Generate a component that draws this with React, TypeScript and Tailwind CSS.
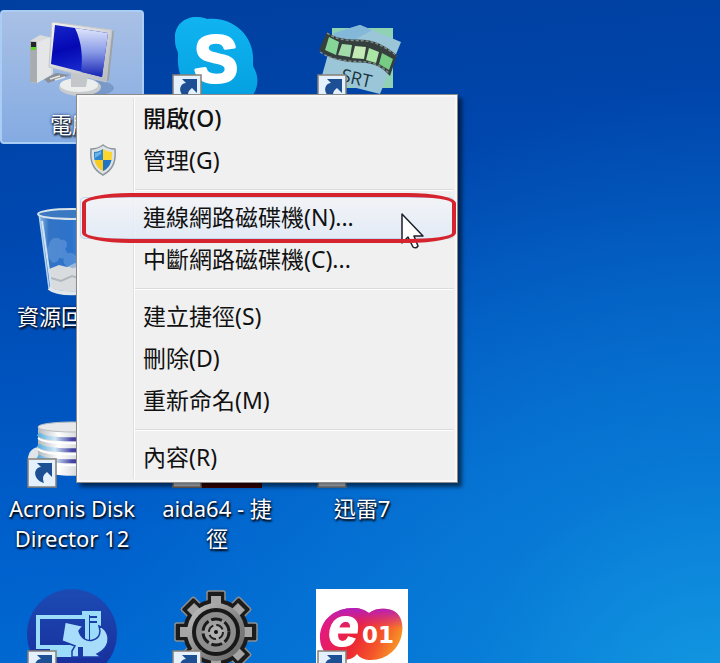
import { Fragment, type ReactNode } from 'react';
import clsx from 'clsx';

function ComputerIcon() {
  return (
    <svg viewBox="0 0 92 92" className="size-full">
      <defs>
        <linearGradient id="screen" x1="0" y1="0" x2="0.3" y2="1">
          <stop offset="0" stopColor="#1626c8" />
          <stop offset="0.5" stopColor="#0408b4" />
          <stop offset="1" stopColor="#1a2fd0" />
        </linearGradient>
        <linearGradient id="glare" x1="0" y1="0" x2="0" y2="1">
          <stop offset="0" stopColor="#dfe6fb" />
          <stop offset="0.5" stopColor="#8798e6" />
          <stop offset="1" stopColor="#1522b4" />
        </linearGradient>
        <linearGradient id="bezel" x1="0" y1="0" x2="1" y2="1">
          <stop offset="0" stopColor="#f4f4f4" />
          <stop offset="1" stopColor="#b5b9bd" />
        </linearGradient>
      </defs>
      <path d="M18 66l12-6 14 2-22 8z" fill="#8a9097" />
      <path d="M24 66l10-3M29 67l10-3" stroke="#e6e6e6" strokeWidth="1.5" />
      <path d="M4 28l10-6 13 3v36L11 70l-7-1z" fill="#d9dbdd" />
      <path d="M4 28l7 1v41l-7-1z" fill="#a9adb1" />
      <path d="M11 29l14-5v38l-14 8z" fill="#e4e6e7" />
      <path d="M5 29h5v5H5z" fill="#20262c" />
      <path d="M5 34h5v3H5z" fill="#61d42a" />
      <ellipse cx="64" cy="75" rx="24" ry="8" fill="#5878a8" opacity="0.45" />
      <ellipse cx="54" cy="74" rx="21" ry="9" fill="#c9cccf" />
      <ellipse cx="53" cy="72" rx="19" ry="7" fill="#eceded" />
      <path d="M45 58l17 4-2 12H45z" fill="#c4c7ca" />
      <path d="M83 17l5 1-5 49-4 2z" fill="#9da2a7" />
      <path d="M26 9l60 8-6 52-57-15z" fill="url(#bezel)" stroke="#c3c7ca" />
      <path d="M29 12l53 8-6 44-51-13z" fill="url(#screen)" />
      <path d="M49 15l33 5-6 44-21-5c2-14 1-29-6-44z" fill="url(#glare)" />
    </svg>
  );
}

function SkypeIcon() {
  return (
    <svg viewBox="0 0 92 92" className="size-full">
      <defs>
        <linearGradient id="skype" x1="0" y1="0" x2="0" y2="1">
          <stop offset="0" stopColor="#10b4f0" />
          <stop offset="1" stopColor="#049fe0" />
        </linearGradient>
      </defs>
      <path
        d="M4 24C4 11 15 3 27 4c4 0 7 1 9 2 26-3 48 17 46 43 0 3 0 4 1 6 9 16-1 35-17 36-5 0-9-1-13-3C26 92 5 71 7 43c0-2 0-4-1-6-2-4-2-8-2-13z"
        fill="url(#skype)"
      />
      <text x="45" y="69" textAnchor="middle" fontFamily="Liberation Sans, sans-serif" fontWeight="700" fontSize="66" fill="#fff" stroke="#fff" strokeWidth="3" strokeLinejoin="round">
        S
      </text>
    </svg>
  );
}

function SubtitleIcon() {
  return (
    <svg viewBox="0 0 92 92" className="size-full">
      <path d="M16 15h61v60H16z" fill="#8fd3b4" />
      <path d="M18 20l26-8 41 17-21 52L5 66z" fill="#9ac6d8" />
      <path d="M18 20l26-8 12 5-42 24z" fill="#83b8d8" />
      <path d="M11 19c12 9 27 7 40 8 12 2 21 8 30 15l-7 21c-8-9-15-12-24-13-13-1-32 0-47-13z" fill="#35403e" />
      <path d="M13 24l10 5-3 13-11-5z" fill="#86d698" />
      <path d="M26 31l10 1-2 12-12-2z" fill="#a3dca9" />
      <path d="M39 33l11 1-2 12-12-1z" fill="#c4ebb6" />
      <path d="M53 35l10 4-3 11-10-3z" fill="#abe7a4" />
      <path d="M66 40l11 6-4 11-10-6z" fill="#77cb83" />
      <path d="M11 20c12 9 27 7 40 8 12 2 21 8 30 15M4 39c15 10 33 9 46 10 10 1 17 5 24 12" fill="none" stroke="#828d8b" strokeWidth="1.5" strokeDasharray="3 2" />
      <text x="24" y="68" transform="rotate(13 24 68)" fontFamily="Open Sans, sans-serif" fontSize="18" fontWeight="500" fill="#20353e">
        SRT
      </text>
    </svg>
  );
}

function RecycleBinIcon() {
  return (
    <svg viewBox="0 0 92 92" className="size-full">
      <defs>
        <linearGradient id="bin" x1="0" y1="0" x2="1" y2="0">
          <stop offset="0" stopColor="#8fbce6" />
          <stop offset="0.15" stopColor="#3273c4" />
          <stop offset="0.5" stopColor="#2c73cc" />
          <stop offset="1" stopColor="#8fbce6" />
        </linearGradient>
      </defs>
      <path d="M13 9l10 74c8 7 38 7 46 0L79 9z" fill="url(#bin)" stroke="#b6d2ea" strokeWidth="1.5" />
      <path d="M23 64l10-4 8 2 8-4 10 4 10-1-2 20c-8 7-34 7-43 1z" fill="#d9dcde" />
      <path d="M25 73l10 3 11-5 13 4" fill="none" stroke="#b2b8bc" strokeWidth="2" />
      <path d="M23 40c0-6 8-10 12-5 6-2 8 6 4 9 5 5 0 11-6 9-1 6-8 6-9 1-6-4-4-9-1-14zM39 50c5-5 13-1 11 5 5 4-1 11-6 7-5 1-9-7-5-12z" fill="#699cda" opacity="0.55" />
      <path d="M16 16l9 64" stroke="#cfe2f4" strokeWidth="2" />
      <ellipse cx="46" cy="9" rx="34" ry="5" fill="#3a78c2" stroke="#d8e3ea" strokeWidth="2" />
      <path d="M23 83c8 7 38 7 46 0" fill="none" stroke="#e0e6ea" strokeWidth="4" />
    </svg>
  );
}

function DiskStackIcon() {
  return (
    <svg viewBox="0 0 92 92" className="size-full">
      <defs>
        <linearGradient id="disk" x1="0" y1="0" x2="1" y2="0">
          <stop offset="0" stopColor="#b4b9bd" />
          <stop offset="0.3" stopColor="#fff" />
          <stop offset="1" stopColor="#9aa0a6" />
        </linearGradient>
        <linearGradient id="band" x1="0" y1="0" x2="1" y2="0">
          <stop offset="0" stopColor="#58aede" />
          <stop offset="0.25" stopColor="#cfe7f4" />
          <stop offset="0.5" stopColor="#4743a5" />
          <stop offset="1" stopColor="#302b8a" />
        </linearGradient>
      </defs>
      <ellipse cx="13" cy="62" rx="11" ry="12" fill="#e2e5e8" />
      <path d="M12 30v42c8 9 60 9 68 0V30z" fill="url(#disk)" />
      {[37, 48, 59].map((y) => (
        <g key={y} fill="none">
          <path d={`M12 ${y}c8 7 60 7 68 0`} stroke="url(#band)" strokeWidth="4" />
          <path d={`M12 ${y + 4}c8 7 60 7 68 0`} stroke="#fff" strokeWidth="2" />
        </g>
      ))}
      <ellipse cx="46" cy="30" rx="34" ry="5" fill="#e6e8ea" stroke="#b9bec2" />
    </svg>
  );
}

function AidaIcon() {
  return (
    <svg viewBox="0 0 92 92" className="size-full">
      <path d="M2 2h89v89H2z" fill="#3c0406" />
    </svg>
  );
}

function ThunderIcon() {
  return (
    <svg viewBox="0 0 92 92" className="size-full">
      <path d="M4 40C30 38 50 24 86 8 78 40 60 62 30 72z" fill="#4ab3f4" />
    </svg>
  );
}

function RemoteIcon() {
  return (
    <svg viewBox="0 0 92 92" className="size-full">
      <defs>
        <linearGradient id="remote" x1="0" y1="0" x2="0" y2="1">
          <stop offset="0" stopColor="#1c4bb4" />
          <stop offset="1" stopColor="#182a98" />
        </linearGradient>
      </defs>
      <circle cx="46" cy="45" r="45" fill="url(#remote)" />
      <path d="M12 28h49v30H12z" fill="none" stroke="#9bdcfa" strokeWidth="4" />
      <path d="M24 60h26v8H24z" fill="#9bdcfa" />
      <path d="M56 22h19v34H64V26h-8z" fill="#9bdcfa" />
      <path d="M64 27h7v2h-7zM64 32h7v2h-7z" fill="#1b3ca8" />
      <path
        d="M39 33l18 4-4 5c2 7 8 11 14 9 7-2 8-8 6-14 9 3 12 14 6 22-3 4-6 5-8 6l4 3H46v-6l3-5-13-5z"
        fill="#a8dcfb"
        stroke="#1b3ca8"
        strokeWidth="1.5"
      />
      <path d="M52 58h5v10h-5z" fill="#1b3ca8" />
    </svg>
  );
}

const TEETH = [0, 45, 90, 135, 180, 225, 270, 315];

function GearIcon() {
  return (
    <svg viewBox="0 0 92 92" className="size-full">
      <defs>
        <linearGradient id="steel" x1="0" y1="0" x2="1" y2="1">
          <stop offset="0" stopColor="#c6c6c6" />
          <stop offset="0.5" stopColor="#8c8c8c" />
          <stop offset="1" stopColor="#626262" />
        </linearGradient>
      </defs>
      {TEETH.map((deg) => (
        <path key={deg} d="M36 20V4q0-2 2-2h14q2 0 2 2v16z" transform={`rotate(${deg} 45 43)`} fill="#1c1c1c" stroke="#8f8f8f" strokeWidth="1.5" />
      ))}
      <circle cx="45" cy="43" r="33" fill="#1b1b1b" />
      {TEETH.map((deg) => (
        <path key={deg} d="M40 22V7h10v15z" transform={`rotate(${deg} 45 43)`} fill="#a6a6a6" />
      ))}
      <circle cx="45" cy="43" r="29" fill="url(#steel)" />
      <circle cx="45" cy="43" r="22" fill="#8d8d8d" stroke="#181818" strokeWidth="4" />
      <circle cx="45" cy="43" r="13" fill="#a1a1a1" stroke="#1a1a1a" strokeWidth="3" strokeDasharray="11 3" />
      <circle cx="45" cy="43" r="7" fill="#b1b1b1" stroke="#222" strokeWidth="2" strokeDasharray="8 3" />
      <circle cx="45" cy="43" r="2" fill="#111" />
    </svg>
  );
}

function E01Icon() {
  const blob = 'M4 50C3 31 19 19 37 19c7 0 12 2 16 5 5-4 11-5 18-4 12 1 17 12 15 24-2 15-15 27-31 27-6 0-11-2-14-6C34 76 5 72 4 50z';
  return (
    <svg viewBox="0 0 92 92" className="size-full overflow-visible">
      <defs>
        <linearGradient id="e01" x1="0" y1="0.3" x2="1" y2="0.6">
          <stop offset="0" stopColor="#e2188a" />
          <stop offset="0.45" stopColor="#ec2434" />
          <stop offset="0.75" stopColor="#f4562a" />
          <stop offset="1" stopColor="#f79a26" />
        </linearGradient>
        <linearGradient id="e01top" x1="0" y1="0" x2="0" y2="1">
          <stop offset="0" stopColor="#b01fc0" />
          <stop offset="0.4" stopColor="#d41f9a" stopOpacity="0" />
        </linearGradient>
      </defs>
      <path d="M0 0h92v92H0z" fill="#fff" />
      <path d={blob} fill="url(#e01)" />
      <path d={blob} fill="url(#e01top)" />
      <text x="12" y="57" fontFamily="Liberation Sans, sans-serif" fontSize="56" fontWeight="700" fontStyle="italic" fill="#fff" stroke="#fff" strokeWidth="1">
        e
      </text>
      <text x="46" y="54" fontFamily="DejaVu Sans, sans-serif" fontSize="23" fontWeight="700" fill="#fff">
        01
      </text>
    </svg>
  );
}

function ShortcutBadge() {
  return (
    <svg viewBox="0 0 30 30" className="absolute top-[61px] left-px size-[30px]">
      <path d="M1 1h28v28H1z" fill="#e4f0fb" stroke="#857f78" strokeWidth="1.5" />
      <path d="M10 5h15v14l-5-5c-4 3-5 6-3 11-6-1-11-8-8-13 1-2 3-3 5-3z" fill="#1c4f93" />
    </svg>
  );
}

function ShieldIcon() {
  return (
    <svg viewBox="0 0 28 32" className="h-8 w-7">
      <path d="M14 1c4 3 8 4 12 4 1 11-1 20-12 26C3 25 1 16 2 5c4 0 8-1 12-4z" fill="#dfe2e4" stroke="#8d969d" strokeWidth="1.5" />
      <path d="M14 5c-3 2-6 3-9 3 0 3 0 5 .5 8H14z" fill="#2d86cf" />
      <path d="M14 5c3 2 6 3 9 3 0 3 0 5-.5 8H14z" fill="#fbd62f" />
      <path d="M5.500 16c1 5 4 9 8.500 11V16z" fill="#f7cb22" />
      <path d="M22.500 16c-1 5-4 9-8.500 11V16z" fill="#2273c4" />
      <path d="M6 9c2 0 4-.5 6-2v3c-2 1-4 3-6 4z" fill="#8cc6ee" opacity="0.7" />
    </svg>
  );
}

function Pointer() {
  return (
    <svg viewBox="0 0 26 38" className="pointer-events-none absolute top-[15px] left-[320px] h-[38px] w-[26px]">
      <path d="M2 2v29l6-6 5 10q3 2 5-1l-4-10h9z" fill="#fff" stroke="#1d1f2b" strokeWidth="1.5" strokeLinejoin="round" />
    </svg>
  );
}

type Shortcut = { label?: string; icon?: ReactNode; link?: boolean; selected?: boolean };

const shortcuts: Shortcut[] = [
  { label: '電腦', icon: <ComputerIcon />, selected: true },
  { icon: <SkypeIcon />, link: true },
  { icon: <SubtitleIcon />, link: true },
  { label: '資源回收筒', icon: <RecycleBinIcon /> },
  {},
  {},
  { label: 'Acronis Disk Director 12', icon: <DiskStackIcon />, link: true },
  { label: 'aida64 - 捷徑', icon: <AidaIcon />, link: true },
  { label: '迅雷7', icon: <ThunderIcon />, link: true },
  { icon: <RemoteIcon />, link: true },
  { icon: <GearIcon />, link: true },
  { icon: <E01Icon />, link: true },
];

function DesktopIcon({ item }: { item: Shortcut }) {
  if (!item.icon) return <div />;
  return (
    <button
      type="button"
      className={clsx(
        'flex h-[134px] flex-col items-center justify-start gap-1 rounded-sm border-2 pt-px',
        item.selected ? 'border-[#a9cdf5] bg-linear-to-b from-[#a9c0e5] to-[#84abe2]' : 'border-transparent',
      )}
    >
      <span className="relative block size-[92px] shrink-0">
        {item.icon}
        {item.link ? <ShortcutBadge /> : null}
      </span>
      {item.label ? (
        <span className="w-32 text-center text-[22px] leading-[30px] text-white [text-shadow:1px_2px_2px_#000,0_0_3px_#001c50]">{item.label}</span>
      ) : null}
    </button>
  );
}

type MenuEntry = { label: string; bold?: boolean; shield?: boolean; active?: boolean };

const groups: MenuEntry[][] = [
  [
    { label: '開啟(O)', bold: true },
    { label: '管理(G)', shield: true },
  ],
  [{ label: '連線網路磁碟機(N)...', active: true }, { label: '中斷網路磁碟機(C)...' }],
  [{ label: '建立捷徑(S)' }, { label: '刪除(D)' }, { label: '重新命名(M)' }],
  [{ label: '內容(R)' }],
];

function MenuItem({ entry }: { entry: MenuEntry }) {
  return (
    <div className="relative">
      <button
        type="button"
        role="menuitem"
        className={clsx(
          'flex h-[42px] w-full items-center rounded-sm border pb-0.5 text-left text-[23px] leading-8 text-[#111]',
          entry.bold && 'font-medium',
          entry.active ? 'border-[#c3d8f0] bg-linear-to-b from-[#f2f4f8]/80 to-[#e0eaf7]/80' : 'border-transparent',
        )}
      >
        <span className="flex w-[62px] shrink-0 pl-2">{entry.shield ? <ShieldIcon /> : null}</span>
        {entry.label}
      </button>
      {entry.active ? (
        <>
          <Pointer />
          <div className="pointer-events-none absolute -inset-y-1 right-[-2px] left-[2px] rounded-[48px/10px] border-4 border-[#d5242e]" />
        </>
      ) : null}
    </div>
  );
}

function ContextMenu() {
  return (
    <div
      role="menu"
      className="absolute top-[94px] left-[76px] w-[382px] border border-[#8b8b8b] bg-[#f0f0f0] p-[3px] shadow-[4px_4px_4px_rgba(0,0,0,0.55),inset_0_0_0_2px_#f8f8f8]"
    >
      <div className="absolute inset-y-[3px] left-[56px] w-[2px] border-l border-[#e0e0e0] bg-white" />
      {groups.map((group, i) => (
        <Fragment key={group[0].label}>
          {i > 0 ? (
            <div role="separator" className="flex h-[15px] items-center pl-[55px]">
              <div className="h-[2px] w-full border-t border-[#dcdcdc] bg-white" />
            </div>
          ) : null}
          {group.map((entry) => (
            <MenuItem key={entry.label} entry={entry} />
          ))}
        </Fragment>
      ))}
    </div>
  );
}

export default function App() {
  return (
    <main className="relative h-screen overflow-hidden bg-[radial-gradient(ellipse_at_100%_108%,#149ae2_0%,rgba(12,134,218,0.65)_25%,rgba(10,110,205,0)_62%),linear-gradient(175deg,#003f9f_0%,#0049b2_35%,#0060cc_75%,#006cd4_100%)] pt-[10px] font-['Noto_Sans','Noto_Sans_CJK_TC',sans-serif]">
      <div className="grid auto-rows-[134px] grid-cols-[repeat(3,144px)] gap-x-px gap-y-[58px]">
        {shortcuts.map((item, i) => (
          <DesktopIcon key={i} item={item} />
        ))}
      </div>
      <ContextMenu />
    </main>
  );
}
